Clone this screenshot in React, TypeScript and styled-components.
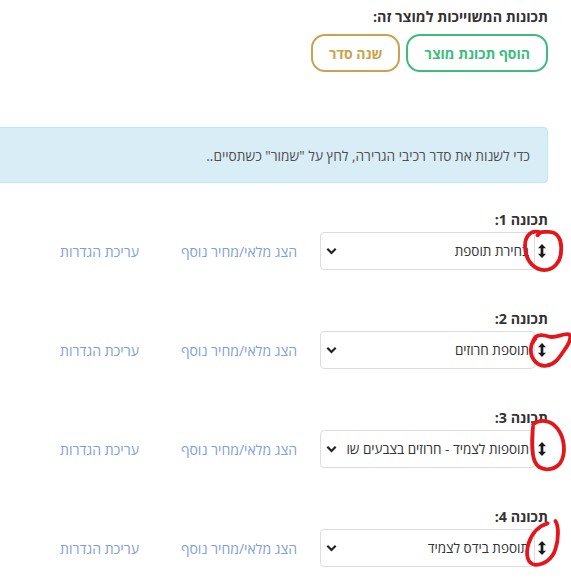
import React from "react";
import styled, { createGlobalStyle } from "styled-components";

const Global = createGlobalStyle`
  html, body { margin: 0; padding: 0; background: #fff; }
  body {
    direction: rtl;
    font-family: "Open Sans", "Liberation Sans", "DejaVu Sans", sans-serif;
    color: #333;
    overflow: hidden;
  }
`;

const Page = styled.div`
  width: 571px;
  box-sizing: border-box;
  padding: 7px 23px 0 0;
`;

const Title = styled.div`
  font-size: 14.3px;
  font-weight: 700;
  line-height: 20px;
  color: #333;
`;

const ButtonBar = styled.div`
  display: flex;
  gap: 6px;
  margin-top: 7px;
`;

const OutlineButton = styled.button<{ $color: string }>`
  height: 38px;
  padding: 0 16px;
  border: 2px solid ${(p) => p.$color};
  border-radius: 14px;
  background: #fff;
  color: ${(p) => p.$color};
  font-family: inherit;
  font-size: 14px;
  font-weight: 700;
  cursor: pointer;
`;

const Alert = styled.div`
  margin: 55px 0 27px -10px;
  height: 56px;
  box-sizing: border-box;
  display: flex;
  align-items: center;
  padding-right: 17px;
  background: #d9edf7;
  border: 1px solid #bce8f1;
  border-radius: 4px;
  color: #505050;
  font-size: 13.7px;
`;

const Row = styled.div`
  margin-bottom: 39px;
`;

const Label = styled.div`
  font-size: 14.3px;
  font-weight: 700;
  line-height: 20px;
  margin-bottom: 2px;
`;

const Line = styled.div`
  display: flex;
  align-items: center;
`;

const Handle = styled.div`
  position: relative;
  width: 8px;
  height: 38px;
  display: flex;
  align-items: center;
  margin-right: 2px;
  margin-left: 3px;
  flex-shrink: 0;
`;

const Scribble = styled.svg`
  position: absolute;
  left: -16px;
  top: -11px;
  width: 50px;
  height: 56px;
  overflow: visible;
  pointer-events: none;
`;

const SelectBox = styled.div`
  width: 215px;
  height: 38px;
  box-sizing: border-box;
  border: 1px solid #ddd;
  border-radius: 4px;
  display: flex;
  align-items: center;
  padding: 0 5px 0 5px;
  background: #fff;
`;

const SelectText = styled.div`
  flex: 1;
  overflow: hidden;
  white-space: nowrap;
  font-size: 13.5px;
  color: #333;
`;

const Chevron = styled.svg`
  width: 11px;
  height: 8px;
  flex-shrink: 0;
  margin-right: 10px;
`;

const Link = styled.a<{ $gap: number }>`
  margin-right: ${(p) => p.$gap}px;
  font-size: 14px;
  color: #7f9fd8;
  text-decoration: none;
  white-space: nowrap;
`;

const scribbles = [
  "M -3 -17 C -11 -19 -16 -12 -15 -2 C -14 10 -6 17 2 17 C 10 17 17 10 17 0 C 18 -10 14 -17 6 -17 C 2 -17 -1 -18 -4 -14",
  "M -8 -8 C -6 -14 0 -14 6 -12 C 12 -10 18 -15 24 -14 C 27 -12 24 -5 20 0 C 16 6 12 13 4 14 C -4 15 -10 8 -10 0 C -10 -4 -9 -7 -6 -10",
  "M -8 -22 C -2 -27 8 -26 14 -18 C 20 -10 22 4 16 13 C 10 20 -2 20 -6 12 C -10 4 -9 -10 -8 -20",
  "M 12 -24 C 15 -20 15 -8 12 1 C 9 10 2 15 -6 15 C -13 14 -15 6 -12 -4 C -9 -14 -2 -20 5 -22",
];

const items = [
  "בחירת תוספת",
  "תוספת חרוזים",
  "תוספות לצמיד - חרוזים בצבעים שונים",
  "תוספת בידס לצמיד",
];

export default function App() {
  return (
    <Page>
      <Global />
      <Title>תכונות המשוייכות למוצר זה:</Title>
      <ButtonBar>
        <OutlineButton $color="#3dbd7d">הוסף תכונת מוצר</OutlineButton>
        <OutlineButton $color="#c9a24e">שנה סדר</OutlineButton>
      </ButtonBar>
      <Alert>כדי לשנות את סדר רכיבי הגרירה, לחץ על "שמור" כשתסיים..</Alert>
      {items.map((text, i) => (
        <Row key={i}>
          <Label>תכונה {i + 1}:</Label>
          <Line>
            <Handle>
              <svg width="9" height="16" viewBox="0 0 9 16">
                <path d="M4.5 0 L9 4.8 H6 V11.2 H9 L4.5 16 L0 11.2 H3 V4.8 H0 Z" fill="#1a1a1a" />
              </svg>
              <Scribble viewBox="-20 -30 50 56">
                <path
                  d={scribbles[i]}
                  transform="scale(1.12)"
                  fill="none"
                  stroke="#e3161b"
                  strokeWidth="3.4"
                  strokeLinecap="round"
                  strokeLinejoin="round"
                />
              </Scribble>
            </Handle>
            <SelectBox>
              <SelectText>{text}</SelectText>
              <Chevron viewBox="0 0 11 8">
                <path d="M1.3 1.8 L5.5 6 L9.7 1.8" fill="none" stroke="#222" strokeWidth="2.2" />
              </Chevron>
            </SelectBox>
            <Link $gap={23} href="#">הצג מלאי/מחיר נוסף</Link>
            <Link $gap={42} href="#">עריכת הגדרות</Link>
          </Line>
        </Row>
      ))}
    </Page>
  );
}
